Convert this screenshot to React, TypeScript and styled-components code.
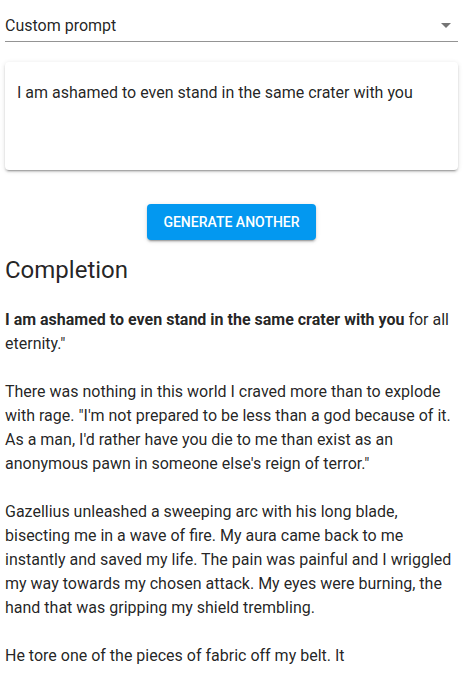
import React from 'react';
import styled, { createGlobalStyle } from 'styled-components';

const GlobalStyle = createGlobalStyle`
  html, body {
    margin: 0;
    padding: 0;
    background: #fff;
  }
  body {
    font-family: Roboto, "Liberation Sans", Arial, sans-serif;
    color: rgba(0, 0, 0, 0.87);
    -webkit-font-smoothing: antialiased;
  }
`;

const Page = styled.main`
  display: flex;
  flex-direction: column;
  padding: 0 8px 0 5px;
`;

const SelectField = styled.div`
  position: relative;
  margin-top: 16px;
  padding: 0 24px 6px 0;
  border-bottom: 1px solid rgba(0, 0, 0, 0.42);
  font-size: 16px;
  line-height: 19px;
  cursor: pointer;
`;

const SelectIcon = styled.svg`
  position: absolute;
  right: 0;
  top: -3px;
  width: 24px;
  height: 24px;
  fill: rgba(0, 0, 0, 0.54);
`;

const PromptCard = styled.div`
  box-sizing: border-box;
  margin-top: 20px;
  min-height: 108px;
  padding: 21px 12px;
  background: #fff;
  border-radius: 4px;
  box-shadow: 0 3px 1px -2px rgba(0, 0, 0, 0.2), 0 2px 2px 0 rgba(0, 0, 0, 0.14),
    0 1px 5px 0 rgba(0, 0, 0, 0.12);
  font-size: 16px;
  line-height: 19px;
`;

const Actions = styled.div`
  display: flex;
  justify-content: center;
  margin-top: 34px;
`;

const Button = styled.button<{ $color: string }>`
  height: 36px;
  padding: 6px 16px;
  border: 0;
  border-radius: 4px;
  background: ${({ $color }) => $color};
  color: #fff;
  font-family: Roboto, "Liberation Sans", Arial, sans-serif;
  font-size: 14px;
  font-weight: 500;
  letter-spacing: 0;
  text-transform: uppercase;
  box-shadow: 0 3px 1px -2px rgba(0, 0, 0, 0.2), 0 2px 2px 0 rgba(0, 0, 0, 0.14),
    0 1px 5px 0 rgba(0, 0, 0, 0.12);
  cursor: pointer;
`;

const Heading = styled.h2`
  margin: 14px 0 22px;
  font-size: 24px;
  font-weight: 400;
  line-height: 32px;
`;

const Completion = styled.div`
  font-size: 16px;
  line-height: 24px;
  white-space: pre-wrap;

  strong {
    font-weight: 700;
  }
`;

const prompt = 'I am ashamed to even stand in the same crater with you';

const completion = ` for all eternity."

There was nothing in this world I craved more than to explode with rage. "I'm not prepared to be less than a god because of it. As a man, I'd rather have you die to me than exist as an anonymous pawn in someone else's reign of terror."

Gazellius unleashed a sweeping arc with his long blade, bisecting me in a wave of fire. My aura came back to me instantly and saved my life. The pain was painful and I wriggled my way towards my chosen attack. My eyes were burning, the hand that was gripping my shield trembling.

He tore one of the pieces of fabric off my belt. It`;

export default function App() {
  return (
    <>
      <GlobalStyle />
      <Page>
        <SelectField>
          Custom prompt
          <SelectIcon viewBox="0 0 24 24">
            <path d="M7 10l5 5 5-5z" />
          </SelectIcon>
        </SelectField>
        <PromptCard>{prompt}</PromptCard>
        <Actions>
          <Button $color="#0398f0">Generate another</Button>
        </Actions>
        <Heading>Completion</Heading>
        <Completion>
          <strong>{prompt}</strong>
          {completion}
        </Completion>
      </Page>
    </>
  );
}
